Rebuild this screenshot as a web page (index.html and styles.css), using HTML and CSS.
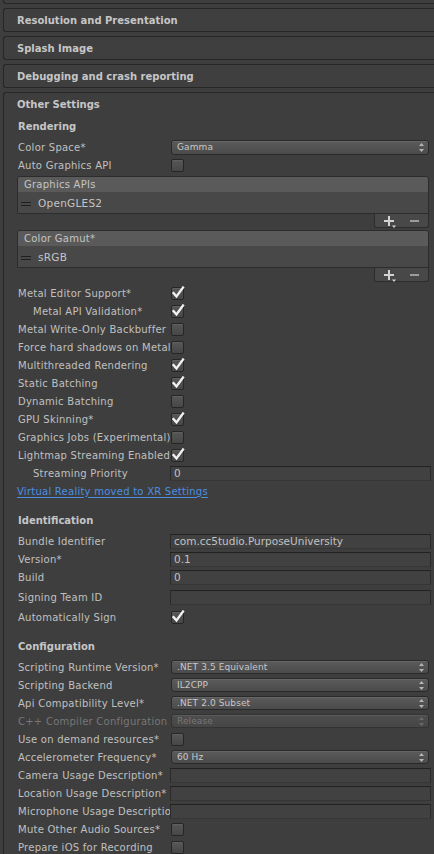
FILE: index.html
```html
<!DOCTYPE html>
<html>
<head>
<meta charset="utf-8">
<title>Player Settings</title>
<link rel="stylesheet" href="styles.css">
</head>
<body>
<div class="inspector">
  <div class="foldout foldout-prev"></div>
  <div class="foldout">Resolution and Presentation</div>
  <div class="foldout">Splash Image</div>
  <div class="foldout">Debugging and crash reporting</div>

  <div class="section">
    <div class="section-title">Other Settings</div>
    <div class="section-body">

      <div class="group-title first">Rendering</div>
      <div class="row">
        <div class="lbl">Color Space*</div>
        <div class="popup popup-tall"><span class="popup-text">Gamma</span><svg class="arrows" width="5" height="9" viewBox="0 0 5 9"><path d="M2.5 0L5 3H0z M2.5 9L0 6h5z"/></svg></div>
      </div>
      <div class="row">
        <div class="lbl">Auto Graphics API</div>
        <div class="toggle"></div>
      </div>

      <div class="rlist">
        <div class="rlist-head">Graphics APIs</div>
        <div class="rlist-body"><span class="handle"></span>OpenGLES2</div>
      </div>
      <div class="rlist-foot">
        <svg class="plus" width="12" height="12" viewBox="0 0 12 12"><path d="M4 0h2v4h4v2H6v4H4V6H0V4h4z"/><path d="M8 9.5h4l-2 2.5z"/></svg>
        <svg class="minus" width="9" height="2" viewBox="0 0 9 2"><rect width="9" height="2"/></svg>
      </div>

      <div class="rlist">
        <div class="rlist-head">Color Gamut*</div>
        <div class="rlist-body"><span class="handle"></span>sRGB</div>
      </div>
      <div class="rlist-foot">
        <svg class="plus" width="12" height="12" viewBox="0 0 12 12"><path d="M4 0h2v4h4v2H6v4H4V6H0V4h4z"/><path d="M8 9.5h4l-2 2.5z"/></svg>
        <svg class="minus" width="9" height="2" viewBox="0 0 9 2"><rect width="9" height="2"/></svg>
      </div>

      <div class="row">
        <div class="lbl">Metal Editor Support*</div>
        <div class="toggle on"><svg class="check" width="14" height="14" viewBox="0 0 14 14"><path d="M2.5 7l3 3.5 6.5-9"/></svg></div>
      </div>
      <div class="row">
        <div class="lbl indent">Metal API Validation*</div>
        <div class="toggle on"><svg class="check" width="14" height="14" viewBox="0 0 14 14"><path d="M2.5 7l3 3.5 6.5-9"/></svg></div>
      </div>
      <div class="row">
        <div class="lbl">Metal Write-Only Backbuffer</div>
        <div class="toggle"></div>
      </div>
      <div class="row">
        <div class="lbl">Force hard shadows on Metal</div>
        <div class="toggle"></div>
      </div>
      <div class="row">
        <div class="lbl">Multithreaded Rendering</div>
        <div class="toggle on"><svg class="check" width="14" height="14" viewBox="0 0 14 14"><path d="M2.5 7l3 3.5 6.5-9"/></svg></div>
      </div>
      <div class="row">
        <div class="lbl">Static Batching</div>
        <div class="toggle on"><svg class="check" width="14" height="14" viewBox="0 0 14 14"><path d="M2.5 7l3 3.5 6.5-9"/></svg></div>
      </div>
      <div class="row">
        <div class="lbl">Dynamic Batching</div>
        <div class="toggle"></div>
      </div>
      <div class="row">
        <div class="lbl">GPU Skinning*</div>
        <div class="toggle on"><svg class="check" width="14" height="14" viewBox="0 0 14 14"><path d="M2.5 7l3 3.5 6.5-9"/></svg></div>
      </div>
      <div class="row">
        <div class="lbl">Graphics Jobs (Experimental)</div>
        <div class="toggle"></div>
      </div>
      <div class="row">
        <div class="lbl">Lightmap Streaming Enabled</div>
        <div class="toggle on"><svg class="check" width="14" height="14" viewBox="0 0 14 14"><path d="M2.5 7l3 3.5 6.5-9"/></svg></div>
      </div>
      <div class="row">
        <div class="lbl indent">Streaming Priority</div>
        <div class="field">0</div>
      </div>
      <div class="row">
        <a class="link" href="#">Virtual Reality moved to XR Settings</a>
      </div>

      <div class="group-title">Identification</div>
      <div class="row">
        <div class="lbl">Bundle Identifier</div>
        <div class="field">com.cc5tudio.PurposeUniversity</div>
      </div>
      <div class="row">
        <div class="lbl">Version*</div>
        <div class="field">0.1</div>
      </div>
      <div class="row">
        <div class="lbl">Build</div>
        <div class="field">0</div>
      </div>
      <div class="row spaced">
        <div class="lbl">Signing Team ID</div>
        <div class="field"></div>
      </div>
      <div class="row spaced">
        <div class="lbl">Automatically Sign</div>
        <div class="toggle on"><svg class="check" width="14" height="14" viewBox="0 0 14 14"><path d="M2.5 7l3 3.5 6.5-9"/></svg></div>
      </div>

      <div class="group-title">Configuration</div>
      <div class="row">
        <div class="lbl">Scripting Runtime Version*</div>
        <div class="popup"><span class="popup-text">.NET 3.5 Equivalent</span><svg class="arrows" width="5" height="9" viewBox="0 0 5 9"><path d="M2.5 0L5 3H0z M2.5 9L0 6h5z"/></svg></div>
      </div>
      <div class="row">
        <div class="lbl">Scripting Backend</div>
        <div class="popup"><span class="popup-text">IL2CPP</span><svg class="arrows" width="5" height="9" viewBox="0 0 5 9"><path d="M2.5 0L5 3H0z M2.5 9L0 6h5z"/></svg></div>
      </div>
      <div class="row">
        <div class="lbl">Api Compatibility Level*</div>
        <div class="popup"><span class="popup-text">.NET 2.0 Subset</span><svg class="arrows" width="5" height="9" viewBox="0 0 5 9"><path d="M2.5 0L5 3H0z M2.5 9L0 6h5z"/></svg></div>
      </div>
      <div class="row">
        <div class="lbl disabled">C++ Compiler Configuration</div>
        <div class="popup disabled"><span class="popup-text">Release</span><svg class="arrows" width="5" height="9" viewBox="0 0 5 9"><path d="M2.5 0L5 3H0z M2.5 9L0 6h5z"/></svg></div>
      </div>
      <div class="row">
        <div class="lbl">Use on demand resources*</div>
        <div class="toggle"></div>
      </div>
      <div class="row">
        <div class="lbl">Accelerometer Frequency*</div>
        <div class="popup"><span class="popup-text">60 Hz</span><svg class="arrows" width="5" height="9" viewBox="0 0 5 9"><path d="M2.5 0L5 3H0z M2.5 9L0 6h5z"/></svg></div>
      </div>
      <div class="row">
        <div class="lbl">Camera Usage Description*</div>
        <div class="field"></div>
      </div>
      <div class="row">
        <div class="lbl">Location Usage Description*</div>
        <div class="field"></div>
      </div>
      <div class="row">
        <div class="lbl">Microphone Usage Description*</div>
        <div class="field"></div>
      </div>
      <div class="row">
        <div class="lbl">Mute Other Audio Sources*</div>
        <div class="toggle"></div>
      </div>
      <div class="row">
        <div class="lbl">Prepare iOS for Recording</div>
        <div class="toggle"></div>
      </div>

    </div>
  </div>
</div>
</body>
</html>
```

FILE: styles.css
```css
* {
  box-sizing: border-box;
}

html,
body {
  margin: 0;
  padding: 0;
  overflow: hidden;
}

body {
  width: 434px;
  height: 854px;
  background: #3e3e3e;
  font-family: "DejaVu Sans", "Liberation Sans", sans-serif;
  font-size: 10px;
  letter-spacing: 0.25px;
  color: #c0c0c0;
}

/* collapsed foldout headers */
.foldout {
  height: 24px;
  margin: 0 0 4px 3px;
  padding-left: 13px;
  display: flex;
  align-items: center;
  border: 1px solid #262626;
  border-right: none;
  border-radius: 3px 0 0 3px;
  background: #3f3f3f;
  font-weight: bold;
  letter-spacing: 0;
  color: #c6c6c6;
}

.foldout-prev {
  margin-top: -20px;
}

/* expanded section */
.section {
  margin-left: 3px;
  border-left: 1px solid #262626;
  border-top: 1px solid #262626;
  border-top-left-radius: 3px;
}

.section-title {
  height: 22px;
  line-height: 23px;
  padding-left: 13px;
  font-weight: bold;
  letter-spacing: 0;
  color: #c6c6c6;
}

.section-body {
  padding-left: 14px;
}

.group-title {
  height: 18px;
  line-height: 18px;
  margin: 12px 0 2px;
  font-weight: bold;
  letter-spacing: 0;
  color: #c6c6c6;
}

.group-title.first {
  margin-top: 3px;
}

/* property rows */
.row {
  height: 18px;
  display: flex;
  align-items: center;
}

.row.spaced {
  margin-top: 2px;
}

.lbl {
  width: 152px;
  flex: none;
  white-space: nowrap;
  overflow: hidden;
}

.lbl.indent {
  padding-left: 15px;
}

.lbl.disabled {
  color: #777777;
}

/* text field */
.field {
  flex: 1;
  height: 15px;
  margin-right: 3px;
  padding-left: 3px;
  border: 1px solid #2a2a2a;
  border-top-color: #222222;
  border-bottom-color: #363636;
  background: #414141;
  font-size: 10.5px;
  letter-spacing: 0;
  line-height: 13px;
  color: #c2c2c2;
  white-space: nowrap;
  overflow: hidden;
}

/* popup / dropdown */
.popup {
  flex: 1;
  height: 14px;
  margin: 0 5px 0 1px;
  padding: 0 4px 0 5px;
  display: flex;
  align-items: center;
  justify-content: space-between;
  border: 1px solid #2a2a2a;
  border-radius: 3px;
  background: linear-gradient(#5b5b5b, #4b4b4b);
  box-shadow: inset 0 1px 0 rgba(255, 255, 255, 0.07);
  font-size: 9px;
  letter-spacing: 0.1px;
  color: #c8c8c8;
}

.popup-tall {
  height: 15px;
}

.popup .arrows {
  fill: #b4b4b4;
}

.popup.disabled {
  background: linear-gradient(#4e4e4e, #464646);
  border-color: #333333;
  color: #777777;
}

.popup.disabled .arrows {
  fill: #6a6a6a;
}

/* checkbox */
.toggle {
  position: relative;
  width: 13px;
  height: 13px;
  margin-left: 1px;
  border: 1px solid #262626;
  border-radius: 2px;
  background: linear-gradient(#575757, #474747);
  box-shadow: inset 0 1px 0 rgba(255, 255, 255, 0.06);
}

.toggle .check {
  position: absolute;
  left: -1px;
  top: -2px;
}

.check path {
  fill: none;
  stroke: #f2f2f2;
  stroke-width: 2.3;
  stroke-linecap: square;
}

/* reorderable list */
.rlist {
  margin: 2px 5px 0 -1px;
  border: 1px solid #2c2c2c;
  border-radius: 3px 3px 0 0;
  overflow: hidden;
}

.rlist-head {
  height: 15px;
  line-height: 15px;
  padding-left: 6px;
  background: #5a5a5a;
  color: #c4c4c4;
}

.rlist-body {
  height: 21px;
  padding-left: 3px;
  display: flex;
  align-items: center;
  background: #484848;
  font-size: 10.5px;
  color: #c4c4c4;
}

.handle {
  width: 10px;
  height: 4px;
  margin: 2px 7px 0 0;
  border-top: 1px solid #1f1f1f;
  border-bottom: 1px solid #1f1f1f;
}

.rlist-foot {
  width: 55px;
  height: 14px;
  margin: 0 5px 2px auto;
  padding: 0 9px 0 9px;
  display: flex;
  align-items: center;
  justify-content: space-between;
  border: 1px solid #2c2c2c;
  border-top: none;
  border-radius: 0 0 3px 3px;
  background: #484848;
}

.plus {
  fill: #d2d2d2;
  margin-top: 2px;
}

.minus {
  fill: #9c9c9c;
}

/* link */
.link {
  margin-left: -1px;
  color: #4a8fe2;
  text-decoration: underline;
  text-underline-offset: 2px;
  white-space: nowrap;
}
```
